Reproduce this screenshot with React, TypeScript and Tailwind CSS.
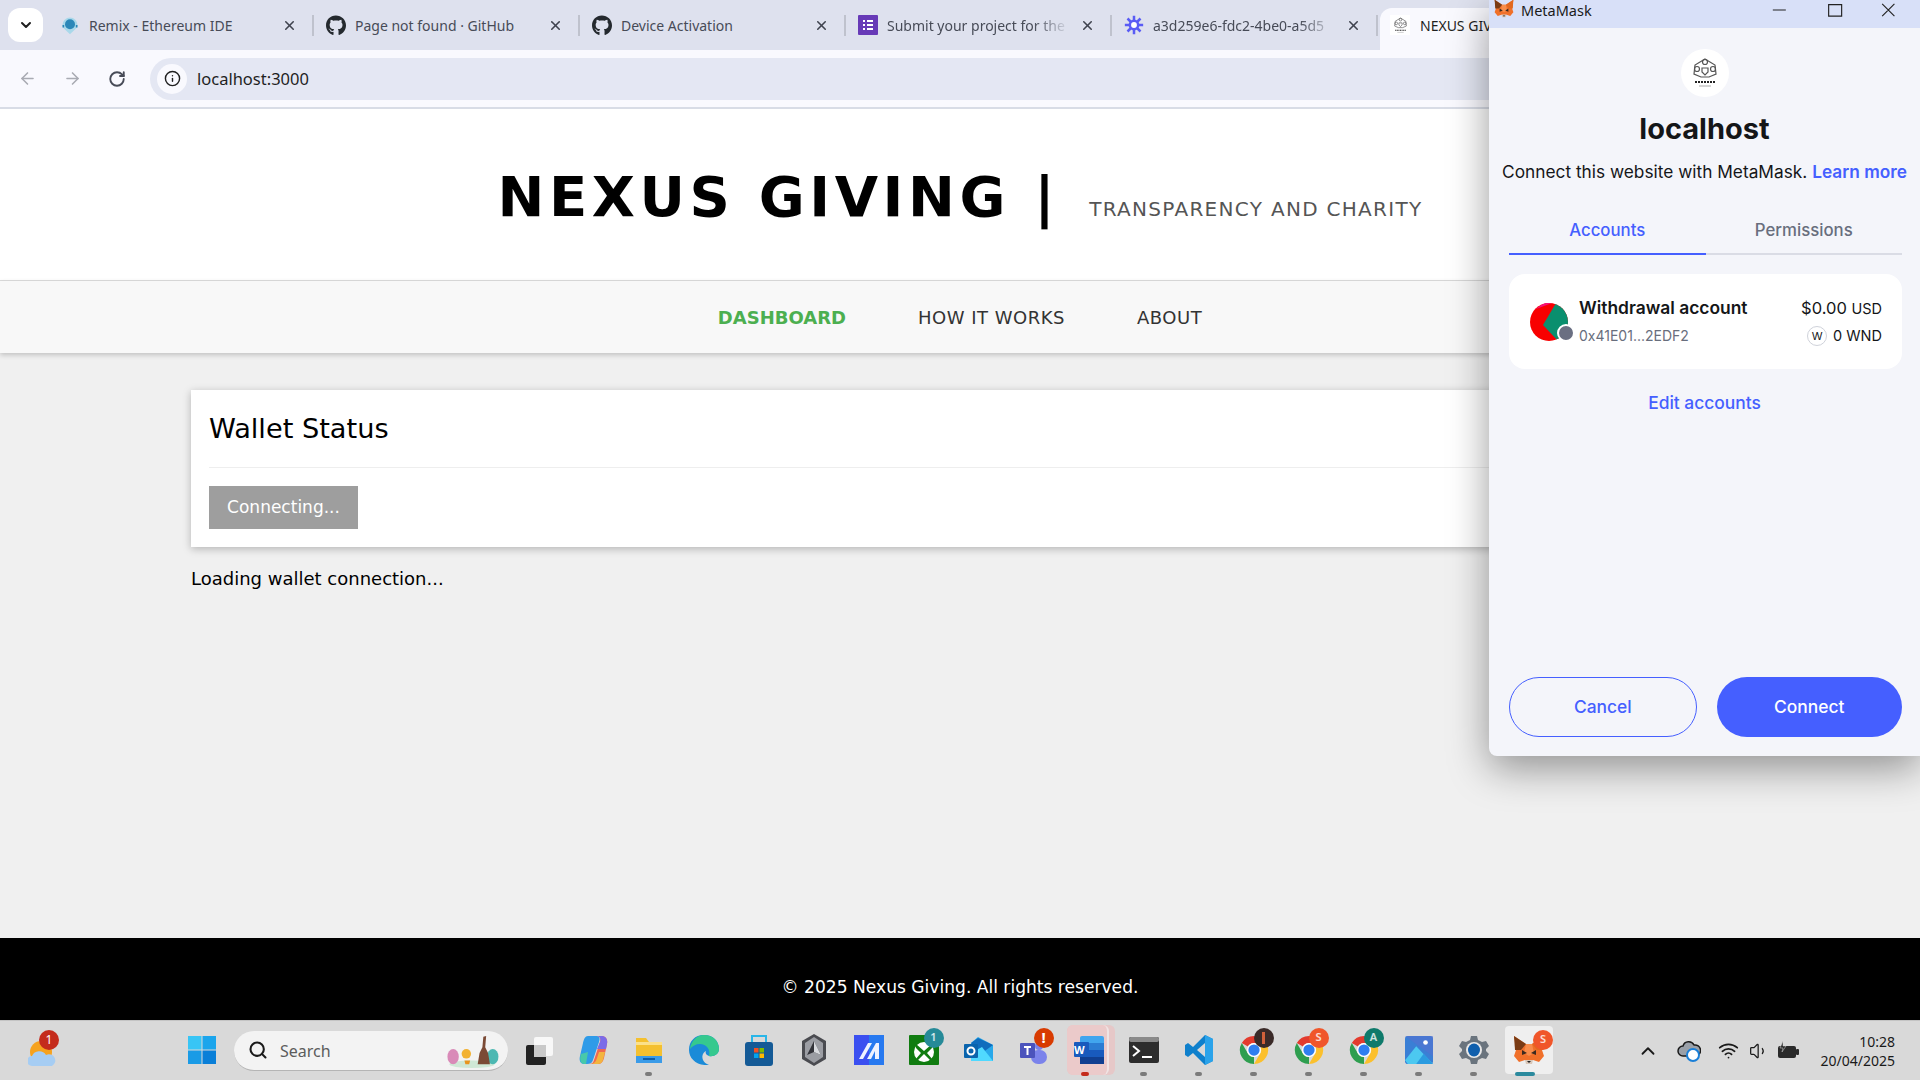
import { FaGithub } from 'react-icons/fa';
import { ArrowLeft, ArrowRight, ChevronDown, ChevronUp, Info, RotateCw, Search, Volume1, Wifi, X } from 'lucide-react';
import type { ReactNode } from 'react';

const ui = "font-['Noto_Sans',sans-serif]";
const page = "font-['DejaVu_Sans',sans-serif]";
const mm = "font-['Inter',sans-serif]";

function RemixIcon() {
    return (
        <svg viewBox="0 0 24 24" className="w-5 h-5">
            <path d="M3 12a9 9 0 0118 0c0 4-4 6-9 11-5-5-9-7-9-11z" fill="#a9d8ea" />
            <circle cx="12" cy="11" r="6" fill="#2b87b8" />
            <path d="M3 12h2v3H3zM19 12h2v3h-2z" fill="#2b87b8" />
        </svg>
    );
}

function FormsIcon() {
    return (
        <svg viewBox="0 0 20 20" className="w-5 h-5">
            <rect width="20" height="20" rx="1" fill="#673ab7" />
            <path d="M5 5h2v2H5zM9 5h6v2H9zM5 9h2v2H5zM9 9h6v2H9zM5 13h2v2H5zM9 13h6v2H9z" fill="#fff" />
        </svg>
    );
}

function BurstIcon() {
    return (
        <svg viewBox="0 0 24 24" className="w-5 h-5" stroke="#5a5cf5" strokeWidth="3" fill="none">
            <path d="M12 1v22M1 12h22M4.2 4.2l15.6 15.6M19.8 4.2L4.2 19.8" />
            <circle cx="12" cy="12" r="5" fill="#fff" />
        </svg>
    );
}

function NexusLogo({ size }: { size: string }) {
    return (
        <svg viewBox="0 0 32 32" className={size} fill="none" stroke="#555" strokeWidth="1.2">
            <path d="M16 2l10 6 1 9-7 3h-8l-7-3 1-9z" />
            <circle cx="16" cy="5" r="2.5" />
            <circle cx="8" cy="12" r="2.5" />
            <circle cx="24" cy="12" r="2.5" />
            <path d="M13 11h6v4l-3 3-3-3z" />
            <path d="M6 25h20" stroke="#222" strokeWidth="2" strokeDasharray="2 1" />
            <path d="M10 29h12" stroke="#aaa" strokeWidth="1" />
        </svg>
    );
}

function Fox({ size }: { size: string }) {
    return (
        <svg viewBox="0 0 32 30" className={size}>
            <path d="M1 1l12 8h6l12-8-2 14 2 6-5 6-6-2h-8l-6 2-5-6 2-6z" fill="#f0702a" />
            <path d="M1 1l12 8-5 6-6 0z" fill="#7a3b14" />
            <path d="M31 1L19 9l5 6 6 0z" fill="#e2681f" />
            <path d="M13 9h6l2 9-5 3-5-3z" fill="#f88d4b" />
            <path d="M9 15l5 3-5 2zM23 15l-5 3 5 2z" fill="#3b2a20" />
            <path d="M12 25h8l-1 4h-6z" fill="#d9c7b8" />
            <path d="M14 26h4l-2 2z" fill="#222" />
        </svg>
    );
}

function Chrome() {
    return (
        <svg viewBox="0 0 32 32" className="w-[30px] h-[30px]">
            <path d="M16 1a15 15 0 0113 7.5H16a7.5 7.5 0 00-6.5 3.750L3 8.500A15 15 0 0116 1z" fill="#e33b2e" />
            <path d="M29 8.500A15 15 0 0116 31l6.500-11.250A7.500 7.500 0 0022.500 12z" fill="#fbc02d" />
            <path d="M16 31A15 15 0 013 8.500l6.500 11.250A7.500 7.500 0 0016 23.500z" fill="#2e9e4f" />
            <circle cx="16" cy="16" r="7.500" fill="#fff" />
            <circle cx="16" cy="16" r="6" fill="#2f7ef0" />
        </svg>
    );
}

function Badge({ text, color }: { text: string; color: string }) {
    return (
        <span className={`absolute -top-[7px] -right-[5px] w-[20px] h-[20px] rounded-full flex items-center justify-center text-[11px] font-semibold text-white/80 ${color}`}>
            {text}
        </span>
    );
}

function TaskIcon({ children, dot }: { children: ReactNode; dot?: boolean }) {
    return (
        <div className="relative w-[55px] h-[60px] shrink-0 flex items-center justify-center">
            <div className="relative w-[30px] h-[30px] flex items-center justify-center -mt-[2px]">{children}</div>
            {dot && <span className="absolute bottom-[5px] left-[24px] w-[7px] h-[4px] rounded-full bg-[#7b7b7b]" />}
        </div>
    );
}

function Tab({ icon, title, muted }: { icon: ReactNode; title: string; muted?: boolean }) {
    return (
        <div className="w-[266px] h-[42px] shrink-0 flex items-center pl-[13px]">
            <div className="w-[20px] h-[20px] flex items-center justify-center text-[#24292e] shrink-0">{icon}</div>
            <span className={`ml-[9px] flex-1 whitespace-nowrap overflow-hidden text-[14px] text-[#474b57] ${muted ? 'mask-r-from-80%' : ''}`}>
                {title}
            </span>
            <X className="w-[15px] h-[15px] ml-[10px] text-[#3f434e] shrink-0" strokeWidth={2.500} />
            <span className="w-[2px] h-[21px] ml-[15px] -mr-[1px] bg-[#bfc2cd] shrink-0" />
        </div>
    );
}

function BrowserChrome() {
    return (
        <div className={`${ui} shrink-0`}>
            <div className="h-[50px] bg-[#dee1ee] flex items-end overflow-hidden">
                <div className="w-[35px] h-[34px] ml-[8px] mb-[8px] mr-[4px] bg-white rounded-xl flex items-center justify-center shrink-0">
                    <ChevronDown className="w-[16px] h-[16px] text-[#1f1f1f]" strokeWidth={3} />
                </div>
                <div className="flex h-[50px] items-start pt-[4px]">
                    <Tab icon={<RemixIcon />} title="Remix - Ethereum IDE" />
                    <Tab icon={<FaGithub className="w-[21px] h-[21px]" />} title="Page not found · GitHub" />
                    <Tab icon={<FaGithub className="w-[21px] h-[21px]" />} title="Device Activation" />
                    <Tab icon={<FormsIcon />} title="Submit your project for the" muted />
                    <Tab icon={<BurstIcon />} title="a3d259e6-fdc2-4be0-a5d5" muted />
                </div>
                <div className="w-[180px] h-[42px] bg-[#f9f9fe] rounded-t-xl flex items-center pb-[8px] pl-[10px] shrink-0 ml-[3px]">
                    <div className="w-[20px] h-[20px] bg-white flex items-center justify-center">
                        <NexusLogo size="w-[17px] h-[17px]" />
                    </div>
                    <span className="ml-[10px] text-[14px] text-[#1f1f1f] whitespace-nowrap">NEXUS GIVING</span>
                </div>
            </div>
            <div className="h-[57px] bg-[#f9f9fe] flex items-center">
                <ArrowLeft className="w-[19px] h-[19px] ml-[18px] text-[#a9abb3]" strokeWidth={2} />
                <ArrowRight className="w-[19px] h-[19px] ml-[26px] text-[#a9abb3]" strokeWidth={2} />
                <RotateCw className="w-[18px] h-[18px] ml-[26px] text-[#474b57]" strokeWidth={2.500} />
                <div className="flex-1 h-[42px] ml-[24px] bg-[#e4e7f3] rounded-l-full flex items-center pl-[7px]">
                    <div className="w-[30px] h-[30px] rounded-full bg-[#f9f9fe] flex items-center justify-center">
                        <Info className="w-[17px] h-[17px] text-[#1f1f1f]" strokeWidth={2} />
                    </div>
                    <span className="ml-[10px] text-[16.500px] text-[#1f1f1f] pt-[2px]">localhost:3000</span>
                </div>
            </div>
            <div className="h-[2px] bg-[#d8dce6]" />
        </div>
    );
}

function SiteContent() {
    return (
        <div className={`${page} flex-1 flex flex-col min-h-0 bg-[#f0f0f0]`}>
            <header className="h-[172px] bg-white border-b border-[#dddddd] shrink-0 flex justify-center items-baseline pt-[60px]">
                <h1 className="text-[56px] leading-none font-bold tracking-[4.600px] text-black whitespace-nowrap">NEXUS GIVING |</h1>
                <span className="ml-[30px] text-[20px] tracking-[1.300px] text-[#555555] whitespace-nowrap">TRANSPARENCY AND CHARITY</span>
            </header>
            <nav className="h-[72px] bg-[#f8f8f8] shrink-0 flex items-center justify-center gap-[72px] pt-[1px] text-[18px] tracking-[0.500px] text-[#333333] shadow-[0_2px_5px_rgba(0,0,0,0.2)] relative">
                <span className="font-bold tracking-normal text-[#4caf50]">DASHBOARD</span>
                <span>HOW IT WORKS</span>
                <span>ABOUT</span>
            </nav>
            <main className="flex-1 px-[191px] pt-[37px]">
                <section className="h-[157px] bg-white px-[18px] pt-[18px] shadow-[0_2px_8px_rgba(0,0,0,0.25)]">
                    <h2 className="text-[27.200px] leading-[42px] text-black pb-[17px] border-b border-[#eeeeee]">Wallet Status</h2>
                    <button className="mt-[18px] w-[149px] h-[43px] pt-[1px] bg-[#9e9e9e] text-white text-[17px]">Connecting...</button>
                </section>
                <p className="mt-[20px] text-[18px] leading-[23px] text-black">Loading wallet connection...</p>
            </main>
            <footer className="h-[82px] bg-black shrink-0 flex items-center justify-center text-white text-[17.100px] pt-[17px]">
                © 2025 Nexus Giving. All rights reserved.
            </footer>
        </div>
    );
}

function MetaMaskWindow() {
    return (
        <div className={`absolute top-0 right-0 w-[431px] h-[756px] bg-[#f4f5fa] rounded-bl-[8px] flex flex-col shadow-[0_12px_40px_rgba(0,0,0,0.4)] ${mm}`}>
            <div className={`${ui} h-[28px] bg-[#d8e0f8] flex items-start shrink-0 text-[14.500px] leading-[20px] text-[#1a1a1a] overflow-hidden`}>
                <div className="ml-[5px] -mt-[1px]"><Fox size="w-[20px] h-[19px]" /></div>
                <span className="ml-[7px]">MetaMask</span>
                <svg viewBox="0 0 170 20" className="ml-auto mr-[21px] w-[130px] h-[20px]" fill="none" stroke="#222" strokeWidth="1.500">
                    <path d="M5 10h17M78 3h17v15H78zM148 2l16 16M164 2l-16 16" />
                </svg>
            </div>
            <div className="w-[48px] h-[48px] rounded-full bg-white mx-auto mt-[21px] flex items-center justify-center">
                <NexusLogo size="w-[32px] h-[32px]" />
            </div>
            <h1 className="mt-[13px] text-center text-[29px] leading-[38px] font-bold text-[#141618]">localhost</h1>
            <p className="mt-[12px] text-center text-[17.300px] leading-[24px] text-[#141618] whitespace-nowrap">
                Connect this website with MetaMask. <span className="font-semibold text-[#455fff]">Learn more</span>
            </p>
            <div className="ml-[20px] mr-[18px] mt-[34px] flex h-[37px] text-[16.800px] font-medium">
                <div className="flex-1 text-center text-[#455fff] border-b-2 border-[#455fff]">Accounts</div>
                <div className="flex-1 text-center text-[#686e7d] border-b-2 border-[#dadce5]">Permissions</div>
            </div>
            <div className="ml-[20px] mr-[18px] mt-[19px] h-[95px] bg-white rounded-2xl flex items-center pl-[21px] pr-[20px]">
                <div className="relative w-[38px] h-[38px] shrink-0">
                    <svg viewBox="0 0 38 38" className="w-[38px] h-[38px] rounded-full">
                        <rect width="38" height="38" fill="#f80000" />
                        <path d="M0 10L14 0h8L6 6z" fill="#f5107c" />
                        <path d="M26 0h12v38H28L13 22z" fill="#0a8f6e" />
                    </svg>
                    <span className="absolute right-[-7px] bottom-[-1px] w-[18px] h-[18px] rounded-full bg-[#6a6f82] border-2 border-white" />
                </div>
                <div className="ml-[11px]">
                    <div className="text-[17.400px] leading-[24px] font-semibold text-[#141618] whitespace-nowrap">Withdrawal account</div>
                    <div className="mt-[5px] text-[14px] leading-[22px] text-[#686e7d]">0x41E01...2EDF2</div>
                </div>
                <div className="ml-auto flex flex-col items-end">
                    <div className="text-[16.500px] leading-[24px] text-[#141618] whitespace-nowrap">$0.00 <span className="text-[14.500px]">USD</span></div>
                    <div className="mt-[4px] flex items-center text-[14.500px] leading-[22px] text-[#141618]">
                        <span className="w-[20px] h-[20px] rounded-full border border-[#cfd2da] flex items-center justify-center text-[11px] mr-[6px]">W</span>
                        0 WND
                    </div>
                </div>
            </div>
            <div className="mt-[22px] text-center text-[17.400px] leading-[24px] font-medium text-[#455fff]">Edit accounts</div>
            <div className="mt-auto mb-[19px] ml-[20px] mr-[18px] flex gap-[20px] text-[17.400px] font-medium">
                <button className="flex-1 h-[60px] rounded-full border border-[#455fff] text-[#455fff]">Cancel</button>
                <button className="flex-1 h-[60px] rounded-full bg-[#455fff] text-white">Connect</button>
            </div>
        </div>
    );
}

function Taskbar() {
    return (
        <div className={`${ui} h-[60px] shrink-0 bg-[#d9d9d9] border-t border-[#c4c4c4] flex items-center relative`}>
            <div className="relative w-[30px] h-[36px] ml-[28px] mr-[116px] shrink-0">
                <svg viewBox="0 0 30 36" className="w-[30px] h-[36px]">
                    <circle cx="13" cy="19" r="11" fill="#f6a21e" />
                    <path d="M4 33a5 5 0 010-10 8 8 0 0114-1 6 6 0 016 11z" fill="#a6cdf3" />
                </svg>
                <span className="absolute -top-[3px] left-[11px] w-[20px] h-[20px] rounded-full bg-[#c42b1c] text-white text-[12px] flex items-center justify-center">1</span>
            </div>
            <TaskIcon>
                <svg viewBox="0 0 30 30" className="w-[30px] h-[30px]">
                    <path d="M1 1h13.500v13.500H1z" fill="#38c5f5" />
                    <path d="M15.500 1H29v13.500H15.500z" fill="#1ba5ec" />
                    <path d="M1 15.500h13.500V29H1z" fill="#1a9be6" />
                    <path d="M15.500 15.500H29V29H15.500z" fill="#0a7fd8" />
                </svg>
            </TaskIcon>
            <div className="w-[274px] h-[40px] ml-[5px] mr-[3px] rounded-full bg-[#f3f3f3] border-b border-[#b5b5b5] flex items-center pl-[14px] shrink-0 relative">
                <Search className="w-[20px] h-[20px] text-[#1a1a1a]" strokeWidth={2.500} />
                <span className="ml-[12px] text-[16px] text-[#5c5c5c] pt-[1px]">Search</span>
                <svg viewBox="0 0 60 36" className="absolute right-[6px] bottom-[2px] w-[60px] h-[34px]">
                    <ellipse cx="30" cy="32" rx="24" ry="4" fill="#cfe8d6" />
                    <ellipse cx="10" cy="24" rx="6" ry="8" fill="#d98ab8" />
                    <ellipse cx="52" cy="24" rx="6" ry="8" fill="#4cb8b2" />
                    <circle cx="24" cy="21" r="5" fill="#f2b233" />
                    <path d="M22 28h6l-1 4h-4z" fill="#e8951f" />
                    <path d="M36 32l2-12 3-6 1-11 3-1-1 12 3 6 2 12z" fill="#7b4a35" />
                </svg>
            </div>
            <TaskIcon>
                <svg viewBox="0 0 30 30" className="w-[30px] h-[30px]">
                    <rect x="10" y="2" width="19" height="19" rx="2" fill="#f8f8f8" />
                    <rect x="2" y="10" width="20" height="20" rx="2" fill="#222" />
                    <rect x="10" y="10" width="12" height="12" fill="#c9c9c9" />
                </svg>
            </TaskIcon>
            <TaskIcon>
                <svg viewBox="0 0 30 32" className="w-[30px] h-[32px]">
                    <path d="M9 2h9c3 0 3 3 2 6l-6 18c-1 3-3 4-6 4H5c-4 0-5-4-4-8l3-13c1-4 2-7 5-7z" fill="#2f9be8" />
                    <path d="M18 2h5c4 0 6 4 5 8l-3 14c-1 4-3 6-6 6h-9c3 0 4-1 5-4l6-18c1-3 0-6-3-6z" fill="#f0684f" />
                    <path d="M18 2h5c4 0 6 4 5 8l-1 5h-9l3-7c1-3 0-6-3-6z" fill="#7b6be8" />
                    <path d="M2 20l7-2-2 12H5c-3 0-5-4-3-10z" fill="#48c9a9" />
                    <path d="M20 18h6l-2 8c-1 3-3 4-5 4h-6c3-1 4-3 5-6z" fill="#f3b53f" />
                </svg>
            </TaskIcon>
            <TaskIcon dot>
                <svg viewBox="0 0 30 30" className="w-[30px] h-[30px]">
                    <path d="M2 3h10l3 4h13v21H2z" fill="#f4c02f" />
                    <path d="M2 7h26v3H2z" fill="#fbe08a" />
                    <path d="M2 21h26v7H2z" fill="#3a9be8" />
                    <path d="M9 23h12v2H9z" fill="#0d5da8" />
                </svg>
            </TaskIcon>
            <TaskIcon>
                <svg viewBox="0 0 30 30" className="w-[30px] h-[30px]">
                    <path d="M15 0c9 0 15 6 15 14 0 5-5 8-10 7-3-1-4-3-3-5-2 1-5 4-3 9 1 2 3 4 6 5-12 1-20-6-20-15C0 6 6 0 15 0z" fill="#1b8bd8" />
                    <path d="M15 0c9 0 15 6 15 14 0 5-5 8-10 7 2-7-3-12-9-12-4 0-8 2-10 5C2 6 8 0 15 0z" fill="#35c98e" />
                </svg>
            </TaskIcon>
            <TaskIcon>
                <svg viewBox="0 0 30 32" className="w-[30px] h-[32px]">
                    <rect x="1" y="8" width="28" height="24" rx="3" fill="#145a96" />
                    <path d="M8 8V2h14v6" fill="none" stroke="#29b6e8" strokeWidth="2" />
                    <path d="M10 14h4.500v4.500H10z" fill="#f25022" />
                    <path d="M15.500 14H20v4.500h-4.500z" fill="#7fba00" />
                    <path d="M10 19.500h4.500V24H10z" fill="#00a4ef" />
                    <path d="M15.500 19.500H20V24h-4.500z" fill="#ffb900" />
                </svg>
            </TaskIcon>
            <TaskIcon>
                <svg viewBox="0 0 30 32" className="w-[30px] h-[32px]">
                    <path d="M15 0l12 7v18l-12 7-12-7V7z" fill="#4a4b50" />
                    <path d="M15 3l9 6v14l-9 6-9-6V9z" fill="#9b9da3" />
                    <path d="M15 7l7 14-7-3-7 3z" fill="#33343a" />
                    <path d="M15 7l7 14-7-3z" fill="#d8dade" />
                </svg>
            </TaskIcon>
            <TaskIcon>
                <svg viewBox="0 0 30 30" className="w-[30px] h-[30px]">
                    <rect width="30" height="30" fill="#3a4ff0" />
                    <rect x="15" width="15" height="30" fill="#1f8cf0" opacity="0.700" />
                    <path d="M5 24L14 8h4L9 24zM13 24l9-16h3v16h-4v-8l-4 8z" fill="#eef2ff" />
                </svg>
            </TaskIcon>
            <TaskIcon>
                <svg viewBox="0 0 30 30" className="w-[30px] h-[30px]">
                    <rect width="30" height="30" rx="1" fill="#107c10" />
                    <circle cx="15" cy="17" r="10" fill="#fff" />
                    <path d="M7 9l8 7 8-7v4l-5 5 6 7h-3l-6-6-6 6H6l6-7-5-5z" fill="#107c10" />
                </svg>
                <Badge text="1" color="bg-[#268a98]" />
            </TaskIcon>
            <TaskIcon>
                <svg viewBox="0 0 30 30" className="w-[30px] h-[30px]">
                    <path d="M14 2l15 8v16H7V8z" fill="#28a8ea" />
                    <path d="M7 8l7-5 15 7-11 8z" fill="#0f6cbd" />
                    <path d="M7 18l11-6 11 14H7z" fill="#50d9ff" />
                    <rect x="0" y="9" width="14" height="14" rx="1" fill="#0a64ad" />
                    <circle cx="7" cy="16" r="3.500" fill="none" stroke="#fff" strokeWidth="2" />
                </svg>
            </TaskIcon>
            <TaskIcon>
                <svg viewBox="0 0 30 30" className="w-[30px] h-[30px]">
                    <circle cx="20" cy="11" r="4" fill="#7b83eb" />
                    <rect x="12" y="15" width="16" height="14" rx="7" fill="#7b83eb" />
                    <rect x="1" y="8" width="15" height="15" rx="1" fill="#4b53bc" />
                    <path d="M5 11h7v2H9.500v7h-2v-7H5z" fill="#fff" />
                </svg>
                <span className="absolute -top-[7px] -right-[5px] w-[20px] h-[20px] rounded-full bg-[#d83b01] text-white text-[15px] font-bold flex items-center justify-center">!</span>
            </TaskIcon>
            <div className="relative w-[55px] h-[60px] shrink-0 flex items-center justify-center">
                <div className="absolute top-[4px] left-[6px] w-[48px] h-[50px] rounded-[6px] bg-[#e6c8c8]" />
                <div className="absolute top-[4px] left-[6px] w-[42px] h-[50px] rounded-[6px] bg-[#ebcaca] border-r-2 border-[#f0e4e4]" />
                <svg viewBox="0 0 30 30" className="relative w-[30px] h-[30px] -mt-[2px]">
                    <rect x="6" y="1" width="24" height="28" rx="2" fill="#41a5ee" />
                    <rect x="6" y="8" width="24" height="7" fill="#2b7cd3" />
                    <rect x="6" y="15" width="24" height="7" fill="#185abd" />
                    <rect x="6" y="22" width="24" height="7" fill="#103f91" />
                    <rect x="0" y="7" width="15" height="15" rx="1" fill="#185abd" />
                </svg>
                <span className="absolute left-[13px] top-[21px] text-[11px] font-bold text-white">W</span>
                <span className="absolute bottom-[5px] left-[20px] w-[8px] h-[4px] rounded-full bg-[#c42b1c]" />
            </div>
            <TaskIcon dot>
                <svg viewBox="0 0 30 30" className="w-[30px] h-[30px]">
                    <rect y="2" width="30" height="26" rx="2" fill="#2d2d2d" />
                    <rect y="2" width="30" height="5" rx="2" fill="#8a8a8a" />
                    <path d="M4 11l6 5-6 5" fill="none" stroke="#fff" strokeWidth="2" />
                    <path d="M13 22h10" stroke="#fff" strokeWidth="2" />
                </svg>
            </TaskIcon>
            <TaskIcon dot>
                <svg viewBox="0 0 30 30" className="w-[30px] h-[30px]">
                    <path d="M21 0l8 4v22l-8 4L9 18l-5 4-3-2v-10l3-2 5 4z" fill="#0f80cc" />
                    <path d="M21 8v14l-8-7z" fill="#d9d9d9" />
                    <path d="M21 0l8 4v22l-8 4z" fill="#2ba3ea" />
                </svg>
            </TaskIcon>
            <TaskIcon dot>
                <Chrome />
                <span className="absolute -top-[7px] -right-[5px] w-[20px] h-[20px] rounded-full bg-[#3a2a28] flex items-center justify-center">
                    <span className="w-[3px] h-[12px] bg-[#d0603a]" />
                </span>
            </TaskIcon>
            <TaskIcon dot>
                <Chrome />
                <Badge text="S" color="bg-[#f0562a]" />
            </TaskIcon>
            <TaskIcon dot>
                <Chrome />
                <Badge text="A" color="bg-[#0e7a6b]" />
            </TaskIcon>
            <TaskIcon dot>
                <svg viewBox="0 0 30 30" className="w-[28px] h-[28px]">
                    <rect width="30" height="30" rx="3" fill="#3a7fd5" />
                    <path d="M0 0h30v22z" fill="#5a6fd0" opacity="0.500" />
                    <path d="M0 26l12-15 18 19H3z" fill="#4cc8f0" />
                    <path d="M12 30l8-11 10 11z" fill="#2b9be0" />
                    <circle cx="22" cy="7" r="2.500" fill="#fff" />
                </svg>
            </TaskIcon>
            <TaskIcon dot>
                <svg viewBox="0 0 30 30" className="w-[30px] h-[30px]">
                    <path d="M12 1h6l1 4 4 2 4-1 3 5-3 3v2l3 3-3 5-4-1-4 2-1 4h-6l-1-4-4-2-4 1-3-5 3-3v-2L0 11l3-5 4 1 4-2z" fill="#6a747e" />
                    <circle cx="15" cy="15" r="8" fill="#e8e8e8" />
                    <ellipse cx="15" cy="15" rx="6" ry="6.500" fill="#0f5fad" />
                </svg>
            </TaskIcon>
            <div className="relative w-[55px] h-[60px] shrink-0 flex items-center justify-center">
                <div className="absolute top-[5px] left-[4px] w-[48px] h-[48px] rounded-[4px] bg-[#efefef]" />
                <div className="relative -mt-[2px]"><Fox size="w-[32px] h-[30px]" /></div>
                <span className="absolute top-[9px] right-[3px] w-[20px] h-[20px] rounded-full bg-[#f0562a] text-white/80 text-[11px] font-semibold flex items-center justify-center">S</span>
                <span className="absolute bottom-[5px] left-[14px] w-[20px] h-[4px] rounded-full bg-[#2b8a9e]" />
            </div>
            <div className="ml-auto flex items-center text-[#1a1a1a]">
                <ChevronUp className="w-[22px] h-[22px]" strokeWidth={2} />
                <svg viewBox="0 0 24 22" className="w-[24px] h-[22px] ml-[18px]">
                    <path d="M6 16a5 5 0 010-10 6 6 0 0111-1 5 5 0 012 11z" fill="#9aa0a8" stroke="#1a1a1a" strokeWidth="1.500" />
                    <circle cx="16" cy="15" r="6" fill="#fff" stroke="#1a7fd8" strokeWidth="2" />
                </svg>
                <Wifi className="w-[21px] h-[21px] ml-[17px]" strokeWidth={2} />
                <Volume1 className="w-[20px] h-[20px] ml-[10px]" strokeWidth={1.500} />
                <svg viewBox="0 0 24 20" className="w-[24px] h-[20px] ml-[7px]">
                    <rect x="2" y="5" width="18" height="12" rx="2" fill="#2a2a2a" />
                    <rect x="20" y="8" width="3" height="6" rx="1" fill="#2a2a2a" />
                    <path d="M7 0L4 7h3l-1 4 4-6H7z" fill="#2a2a2a" stroke="#d9d9d9" strokeWidth="0.500" />
                </svg>
                <div className="w-[120px] pl-[20px] pr-[25px] text-right text-[14px] leading-[19px] text-[#1a1a1a] whitespace-nowrap">
                    <div>10:28</div>
                    <div>20/04/2025</div>
                </div>
            </div>
        </div>
    );
}

export default function App() {
    return (
        <div className="relative w-screen h-screen overflow-hidden flex flex-col bg-[#f0f0f0]">
            <BrowserChrome />
            <SiteContent />
            <Taskbar />
            <MetaMaskWindow />
        </div>
    );
}
